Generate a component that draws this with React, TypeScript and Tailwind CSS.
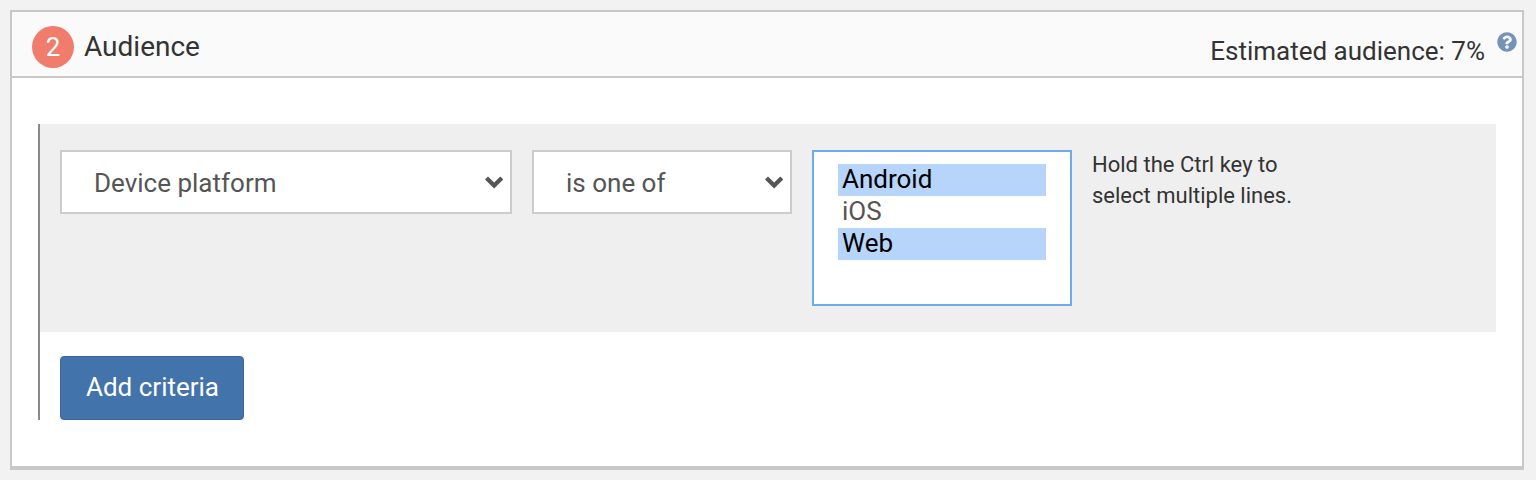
import { FaQuestionCircle } from 'react-icons/fa';

const platforms = [
    { label: 'Android', selected: true },
    { label: 'iOS', selected: false },
    { label: 'Web', selected: true },
];

function Dropdown({ value, width }: { value: string; width: string }) {
    return (
        <div className={`relative h-16 shrink-0 ${width}`}>
            <select
                defaultValue={value}
                className="h-full w-full appearance-none rounded-none border-2 border-[#cccccc] bg-white pl-[32px] pt-[2px] text-[26px] text-[#555555] outline-none"
            >
                <option>{value}</option>
            </select>
            <svg viewBox="0 0 18.3 13.3" className="pointer-events-none absolute right-[9px] top-[26px] h-[13.3px] w-[18.3px] fill-[#555555]">
                <polygon points="0,3.4 3,0.4 9.15,6.6 15.3,0.4 18.3,3.4 9.15,12.6" />
            </svg>
        </div>
    );
}

export default function App() {
    return (
        <div className="h-[480px] bg-[#f2f2f2] p-[10px] pr-[12px] font-['Roboto',sans-serif]">
            <div className="h-[460px] border-2 border-b-4 border-[#c8c8c8] bg-white">
                <div className="flex h-[66px] items-start justify-between border-b-2 border-[#c8c8c8] bg-[#fafafa] pl-5 pr-[5px] pt-[14px]">
                    <div className="flex items-center gap-[10px]">
                        <span className="flex h-[42px] w-[42px] items-center justify-center rounded-full bg-[#f17c6b] text-[26px] text-white">2</span>
                        <h2 className="text-[28px] leading-[42px] text-[#333333]">Audience</h2>
                    </div>
                    <div className="flex items-start pt-[6px]">
                        <span className="mt-[5px] text-[26px] leading-[28px] text-[#333333]">Estimated audience: 7%</span>
                        <FaQuestionCircle className="ml-3 h-5 w-5 text-[#7593b8]" />
                    </div>
                </div>

                <div className="ml-[26px] mr-[26px] mt-[46px] h-[296px] border-l-2 border-[#8a8a8a]">
                    <div className="flex h-[208px] items-start gap-5 bg-[#efefef] pl-5 pt-[26px]">
                        <Dropdown value="Device platform" width="w-[452px]" />
                        <Dropdown value="is one of" width="w-[260px]" />
                        <div className="h-[156px] w-[260px] shrink-0 border-2 border-[#6cacea] bg-white px-6 pt-3 text-[26px] leading-[30px] text-[#555555]">
                            {platforms.map((p) => (
                                <div key={p.label} className={`h-8 pl-1 ${p.selected ? 'bg-[#b7d5fb] text-black' : ''}`}>
                                    {p.label}
                                </div>
                            ))}
                        </div>
                        <p className="-mt-[1px] text-[22px] leading-[31px] text-[#333333]">
                            Hold the Ctrl key to<br />select multiple lines.
                        </p>
                    </div>
                    <button className="ml-5 mt-6 h-16 w-[184px] rounded border border-[#38659a] bg-[#4274ab] pb-[2px] pl-[1px] text-[26px] text-white">
                        Add criteria
                    </button>
                </div>
            </div>
        </div>
    );
}
